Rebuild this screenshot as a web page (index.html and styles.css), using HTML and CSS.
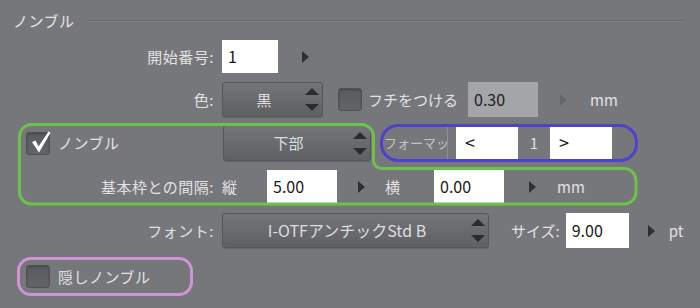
FILE: index.html
```html
<!DOCTYPE html>
<html lang="ja">
<head>
  <meta charset="UTF-8">
  <title>ノンブル</title>
  <link rel="stylesheet" href="styles.css">
</head>
<body>
  <div class="panel">
    <div class="header">
      <span class="title">ノンブル</span>
      <span class="rule"></span>
    </div>

    <div class="row r1">
      <span class="lbl">開始番号:</span>
      <div class="field start">1</div>
      <span class="tri t-start"></span>
    </div>

    <div class="row r2">
      <span class="lbl">色:</span>
      <div class="select color">
        <span class="val">黒</span>
        <span class="spin"><i class="up"></i><i class="dn"></i></span>
      </div>
      <span class="chk edge-chk"></span>
      <span class="edge-lbl">フチをつける</span>
      <div class="field off edge">0.30</div>
      <span class="tri dim t-edge"></span>
      <span class="unit u-edge">mm</span>
    </div>

    <div class="group">
      <div class="row r3">
        <div class="chk-wrap">
          <span class="chk on">
            <svg class="mark" width="24" height="24" viewBox="0 0 24 24">
              <polygon points="3,11 6.5,9.5 9.5,15.5 19.5,0.5 21.5,1.8 10,21.5" fill="#ffffff"/>
            </svg>
          </span>
          <span class="chk-lbl">ノンブル</span>
        </div>
        <div class="select pos">
          <span class="val">下部</span>
          <span class="spin"><i class="up"></i><i class="dn"></i></span>
        </div>
        <div class="fmt">
          <span class="fmt-lbl">フォーマッ</span>
          <div class="field fmt-in">&lt;</div>
          <span class="fmt-num">1</span>
          <div class="field fmt-in">&gt;</div>
        </div>
      </div>

      <div class="row r4">
        <span class="lbl">基本枠との間隔:</span>
        <span class="sub">縦</span>
        <div class="field gap">5.00</div>
        <span class="tri t-gap"></span>
        <span class="sub2">横</span>
        <div class="field gap">0.00</div>
        <span class="tri t-gap2"></span>
        <span class="unit u-gap">mm</span>
      </div>

      <!-- annotation outline round the two rows -->
      <svg class="outline" width="700" height="308" viewBox="0 0 700 308">
        <path d="M31.5 124.5 H361.5 A12 12 0 0 1 373.5 136.5 V160 A8 8 0 0 0 381.5 168.5 H624 A12 12 0 0 1 636 180.5 V192 A12 12 0 0 1 624 204 H31.5 A12 12 0 0 1 19.5 192 V136.5 A12 12 0 0 1 31.5 124.5 Z"
              fill="none" stroke="#6cc24a" stroke-width="3"/>
      </svg>
    </div>

    <div class="row r5">
      <span class="lbl">フォント:</span>
      <div class="select font">
        <span class="val">I-OTFアンチックStd B</span>
        <span class="spin"><i class="up"></i><i class="dn"></i></span>
      </div>
      <span class="size-lbl">サイズ:</span>
      <div class="field size">9.00</div>
      <span class="tri t-size"></span>
      <span class="unit u-size">pt</span>
    </div>

    <div class="row r6">
      <div class="hidden">
        <span class="chk"></span>
        <span class="chk-lbl">隠しノンブル</span>
      </div>
    </div>
  </div>
</body>
</html>
```

FILE: styles.css
```css
body {
  margin: 0;
  background-color: #76777b;
  font-family: "Noto Sans CJK JP", "Liberation Sans", sans-serif;
  font-size: 15px;
  color: #e2e2e2;
}
.panel {
  position: relative;
  width: 700px;
  height: 308px;
  overflow: hidden;
}
.header {
  display: flex;
  align-items: center;
  height: 22px;
  margin-top: 9px;
  padding-left: 13px;
}
.title {
  letter-spacing: 0.5px;
  color: #e6e6e6;
}
.rule {
  flex: 1;
  margin: 2px 17px 0 14px;
  border-top: 1px solid #67686c;
  border-bottom: 1px solid #808185;
}
.row {
  display: flex;
  align-items: center;
  line-height: 1.2;
}
.lbl {
  width: 214px;
  flex-shrink: 0;
  text-align: right;
  margin-right: 8px;
  letter-spacing: 0.5px;
}
.r1 { margin-top: 9px; height: 33px; }
.r2 { margin-top: 9px; height: 35px; }
.r3 { margin-top: 7px; height: 38px; }
.r4 { margin-top: 8px; height: 33px; }
.r5 { margin-top: 10px; height: 35px; }
.r6 { margin-top: 9px; height: 39px; }

/* fields */
.field {
  display: flex;
  align-items: center;
  box-sizing: border-box;
  height: 33px;
  padding-left: 6px;
  background-color: #ffffff;
  color: #1a1a1a;
  font-size: 16px;
  flex-shrink: 0;
}
.field.off {
  background-color: #a4a5a8;
  color: #222;
  height: 35px;
}
.start { width: 56px; }
.edge { width: 70px; margin-left: 5px; }
.gap { width: 70px; }
.size { width: 63px; height: 35px; margin-left: 6px; }

/* triangles */
.tri {
  width: 0;
  height: 0;
  border-left: 7px solid #2e2f32;
  border-top: 6.5px solid transparent;
  border-bottom: 6.5px solid transparent;
  flex-shrink: 0;
}
.tri.dim { border-left-color: #65666a; }
.t-start { margin-left: 24px; }
.t-edge { margin-left: 22px; }
.t-gap { margin-left: 21px; }
.t-gap2 { margin-left: 25px; }
.t-size { margin-left: 19px; }
.unit { margin-left: 23px; }
.u-gap { margin-left: 21px; }
.u-size { margin-left: 14px; }

/* selects */
.select {
  display: flex;
  align-items: center;
  box-sizing: border-box;
  height: 35px;
  border: 1px solid #55565a;
  border-radius: 3px;
  background: linear-gradient(#747579, #5f6064);
  box-shadow: 0 1px 1px rgba(0, 0, 0, 0.15);
  color: #dedede;
  flex-shrink: 0;
}
.select .val {
  flex: 1;
  text-align: center;
  white-space: nowrap;
}
.spin {
  display: flex;
  flex-direction: column;
  gap: 9px;
  margin-right: 3px;
}
.spin i {
  display: block;
  width: 0;
  height: 0;
  border-left: 7.5px solid transparent;
  border-right: 7.5px solid transparent;
}
.spin .up { border-bottom: 7px solid #2a2b2e; }
.spin .dn { border-top: 7px solid #2a2b2e; }
.color { width: 101px; }
.pos { width: 148px; height: 36px; }
.font { width: 267px; }
.font .val { font-size: 16px; }

/* checkboxes */
.chk {
  position: relative;
  display: inline-block;
  box-sizing: border-box;
  width: 24px;
  height: 23px;
  border: 1px solid #505155;
  border-radius: 3px;
  background: linear-gradient(#5a5b5f, #636468);
  box-shadow: inset 0 1px 2px rgba(0, 0, 0, 0.25);
  flex-shrink: 0;
}
.chk .mark {
  position: absolute;
  left: 2px;
  top: -2px;
}
.edge-chk { margin-left: 15px; }
.edge-lbl {
  width: 95px;
  margin-left: 6px;
  white-space: nowrap;
}
.chk-wrap {
  display: flex;
  align-items: center;
  width: 223px;
  box-sizing: border-box;
  padding-left: 26px;
  flex-shrink: 0;
}
.chk-lbl {
  margin-left: 8px;
  letter-spacing: 0.5px;
}

/* format box */
.fmt {
  display: flex;
  align-items: stretch;
  box-sizing: border-box;
  width: 258px;
  height: 38px;
  margin-left: 9px;
  border: 3px solid #4c42cc;
  border-radius: 18px;
  overflow: hidden;
}
.fmt-lbl {
  display: flex;
  align-items: center;
  width: 65px;
  box-sizing: border-box;
  padding-left: 1px;
  margin-right: 8px;
  white-space: nowrap;
  font-size: 13px;
  color: #c2c2c2;
  border-right: 1px solid #8d8e92;
  flex-shrink: 0;
}
.fmt-in {
  width: 62px;
  height: auto;
  padding-left: 9px;
  font-size: 18px;
}
.fmt-num {
  display: flex;
  align-items: center;
  justify-content: center;
  width: 32px;
  color: #e0e0e0;
}

/* spacing row */
.sub {
  width: 45px;
  flex-shrink: 0;
}
.sub2 {
  width: 49px;
  margin-left: 20px;
  flex-shrink: 0;
}
.outline {
  position: absolute;
  left: 0;
  top: 0;
  pointer-events: none;
}

/* font row */
.size-lbl {
  margin-left: 22px;
  white-space: nowrap;
}

/* hidden folio */
.hidden {
  display: flex;
  align-items: center;
  box-sizing: border-box;
  width: 176px;
  height: 39px;
  margin-left: 17px;
  padding-left: 6px;
  border: 3px solid #cf93d8;
  border-radius: 14px;
}
```
